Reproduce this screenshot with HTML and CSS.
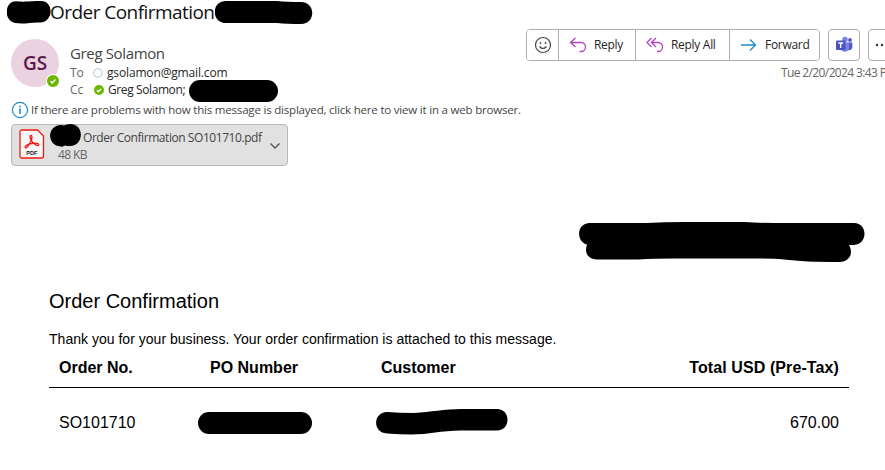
FILE: index.html
```html
<!DOCTYPE html>
<html lang="en">
<head>
<meta charset="utf-8">
<title>Order Confirmation</title>
<link rel="stylesheet" href="styles.css">
</head>
<body>
<header class="subject">
  <svg class="mark-prefix" width="44" height="24" viewBox="0 0 44 24"><path d="M11 1.500C-3-0.500-4 21 8 23C18 24.500 24 22 33 22.500C47 22 47 1 34 1C24 1 20 2 11 1.500Z"/></svg>
  <h1>Order Confirmation</h1>
  <svg class="mark-suffix" width="98" height="24" viewBox="0 0 98 24"><path d="M11 1H62Q72 2 86 2C101 2 101 24 86 24Q72 24 62 23H11C-4 23-4 1 11 1Z"/></svg>
</header>

<section class="message-head">
  <div class="avatar">GS
    <svg class="presence" width="14" height="14" viewBox="0 0 14 14"><circle cx="7" cy="7" r="7" fill="#fff"/><circle cx="7" cy="7" r="6" fill="#6bb700"/><path d="M4.500 7.200L6.200 8.900L9.500 5.500" fill="none" stroke="#fff" stroke-width="1.500"/></svg>
  </div>
  <div class="people">
    <div class="name"><span>Greg Solamon</span></div>
    <div class="line"><span class="label">To</span>
      <svg class="dot" width="10" height="10" viewBox="0 0 10 10"><circle cx="5" cy="5" r="4.300" fill="#fff" stroke="#a9c8d8"/></svg>
      <span class="email">gsolamon@gmail.com</span></div>
    <div class="line"><span class="label">Cc</span>
      <svg class="dot cc-dot" width="10" height="10" viewBox="0 0 10 10"><circle cx="5" cy="5" r="5" fill="#6bb700"/><path d="M2.900 5.200L4.400 6.700L7.200 3.800" fill="none" stroke="#fff" stroke-width="1.300"/></svg>
      <span class="cc-name">Greg Solamon;</span>
      <span class="mark-cc"></span></div>
  </div>
  <div class="side">
    <div class="actions">
      <div class="group">
        <button class="smile" aria-label="React"><svg width="18" height="18" viewBox="0 0 18 18" fill="none" stroke="#444" stroke-width="1.200"><circle cx="9" cy="9" r="7.500"/><path d="M5.500 10.500Q9 14.500 12.500 10.500"/><circle cx="6.500" cy="7" r=".7" fill="#444" stroke-width=".6"/><circle cx="11.500" cy="7" r=".7" fill="#444" stroke-width=".6"/></svg></button>
        <button class="reply"><svg width="18" height="18" viewBox="0 0 18 18" fill="none" stroke="#b146c2" stroke-width="1.300"><path d="M6.500 2L1.500 6.500L6.500 11M1.500 6.500H12A4.500 4.500 0 0 1 12 15.500H10.500"/></svg><span>Reply</span></button>
        <button class="reply-all"><svg width="18" height="18" viewBox="0 0 18 18" fill="none" stroke="#b146c2" stroke-width="1.300"><path d="M5.500 2L1 6.500L5.500 11M10 2L5.500 6.500L10 11M5.500 6.500H12A4.500 4.500 0 0 1 12 15.500H11"/></svg><span>Reply All</span></button>
        <button class="forward"><svg width="18" height="18" viewBox="0 0 18 18" fill="none" stroke="#1e8bcd" stroke-width="1.300"><path d="M1 9H15.500M10 3.500L15.500 9L10 14.500"/></svg><span>Forward</span></button>
      </div>
      <button class="square" aria-label="Teams"><svg width="18" height="18" viewBox="0 0 18 18"><circle cx="15" cy="4" r="1.900" fill="#5059c9"/><path d="M12 6.500H17.300V11.500A3.200 3.200 0 0 1 12 13.500Z" fill="#5059c9"/><circle cx="10" cy="3.500" r="2.700" fill="#7b83eb"/><path d="M5.500 6.500H14V12A4.300 4.300 0 0 1 5.500 12Z" fill="#7b83eb"/><rect x="1" y="4.500" width="9.500" height="9.500" rx="1" fill="#4b53bc"/><path d="M3.300 7H8.200M5.750 7V12" stroke="#fff" stroke-width="1.300"/></svg></button>
      <button class="square more" aria-label="More"><svg width="16" height="4" viewBox="0 0 16 4" fill="#333"><circle cx="2" cy="2" r="1.200"/><circle cx="7" cy="2" r="1.200"/><circle cx="12" cy="2" r="1.200"/></svg></button>
    </div>
    <div class="date"><span>Tue 2/20/2024 3:43 PM</span></div>
  </div>
</section>

<div class="notice">
  <svg width="18" height="18" viewBox="0 0 18 18"><circle cx="9" cy="9" r="7.600" fill="#fff" stroke="#1e8bcd" stroke-width="1.200"/><path d="M9 7.500V13M9 4.700V6.300" stroke="#1e8bcd" stroke-width="1.600"/></svg>
  <span>If there are problems with how this message is displayed, click here to view it in a web browser.</span>
</div>

<div class="attachment">
  <svg class="pdf" width="26" height="30" viewBox="0 0 26 30"><path d="M3 1H18.500L24.500 7V27Q24.500 29 22.500 29H3Q1 29 1 27V3Q1 1 3 1Z" fill="#f7f7f7" stroke="#f01b12" stroke-width="1.300"/><path d="M12 6.500C10.500 6.500 10.800 9.500 13 12.500C15 15.500 19 17.500 19.800 16C20.500 14.300 16 13.700 12.500 14.500C8.500 15.300 5.300 17 6.300 18.500C7.500 20 10.500 15.500 12 12C13.200 9 13.300 6.500 12 6.500Z" fill="none" stroke="#f01b12" stroke-width="1.300"/><text x="12.800" y="25.800" class="pdf-text">PDF</text></svg>
  <div class="file">
    <div class="file-name"><svg class="mark-file" width="31" height="23" viewBox="0 0 31 23"><path d="M11 1Q13 1 14 1.500Q17 0 20 0C35 0 34 22 20 22Q17 22 15 21.500Q13 23 11 22.500C-4 22-3 1 11 1Z"/></svg><span>Order Confirmation SO101710.pdf</span></div>
    <div class="file-size"><span>48 KB</span></div>
  </div>
  <svg class="chevron" width="12" height="8" viewBox="0 0 12 8"><path d="M1.500 1.500L6 6L10.500 1.500" fill="none" stroke="#555" stroke-width="1.400"/></svg>
</div>

<main>
  <svg class="mark-sender" width="286" height="42" viewBox="0 0 286 42"><path d="M11 2H68Q85 1 105 1H165Q180 2 195 2H275C289 2 289 23.500 275 24H270C275 33 270 41 260 41Q225 41 205 38.500Q195 37.500 180 37.500H95Q75 37.500 60 38.500H19C9 38.500 5 32 8 23.500C-3 21-3 2 11 2Z"/></svg>
  <h2>Order Confirmation</h2>
  <p>Thank you for your business. Your order confirmation is attached to this message.</p>
  <div class="row head"><div>Order No.</div><div>PO Number</div><div>Customer</div><div class="total">Total USD (Pre-Tax)</div></div>
  <div class="row">
    <div>SO101710</div>
    <div><span class="mark-po"></span></div>
    <div><svg class="mark-customer" width="132" height="27" viewBox="0 0 132 27"><path d="M11 4Q24 5 38 5C55 4 68 1 86 1H121C135 1 135 22.500 121 22.500H85C65 22.500 53 26.500 35 26.500Q24 26.500 11 25.500C-4 25-3 4 11 4Z"/></svg></div>
    <div class="total">670.00</div>
  </div>
</main>
</body>
</html>
```
FILE: styles.css
```css
* { box-sizing: border-box; }
body {
  margin: 0;
  width: 885px;
  height: 470px;
  overflow: hidden;
  background: #fff;
  color: #262626;
  font-family: "Open Sans", "Noto Sans", sans-serif;
  font-size: 12px;
}
svg { display: block; flex: none; }
span, h1, h2 { white-space: nowrap; }

.subject { display: flex; height: 27px; padding-left: 7px; }
.subject h1 { margin: 0 0 0 -1px; width: 165px; font-size: 19px; font-weight: 400; line-height: 25px; letter-spacing: -.55px; color: #111; }

.message-head { display: flex; height: 74px; padding-left: 11px; }
.avatar {
  position: relative;
  flex: none;
  width: 48px;
  height: 48px;
  margin-top: 12px;
  border-radius: 50%;
  background: #ead2e0;
  color: #59194a;
  font-size: 19px;
  font-weight: 600;
  line-height: 48px;
  text-align: center;
}
.presence { position: absolute; right: -1px; bottom: -1px; }
.people { width: 467px; flex: none; padding: 16px 0 0 11px; }
.name { height: 21px; font-size: 15px; line-height: 20px; letter-spacing: -.36px; color: #444; }
.line { display: flex; align-items: center; height: 17px; line-height: 17px; }
.label { width: 23px; color: #666; }
.dot { margin-right: 4px; }
.cc-dot { margin-left: 1px; }
.email { letter-spacing: -.15px; }
.cc-name { width: 81px; letter-spacing: -.4px; }
.mark-cc { width: 89px; height: 22px; flex: none; border-radius: 11px; background: #000; margin-top: 3px; }

.side { flex: none; width: 380px; padding-top: 2px; }
.actions { display: flex; gap: 8px; height: 32px; }
button { display: flex; align-items: center; margin: 0; padding: 0; border: 0; background: #fff; font: inherit; color: #262626; line-height: 18px; }
.group { display: flex; width: 294px; border: 1px solid #b0aeac; border-radius: 4px; overflow: hidden; }
.group button + button { border-left: 1px solid #b0aeac; }
.smile { width: 31px; justify-content: center; }
.reply { width: 77px; padding-left: 10px; gap: 7px; }
.reply-all { width: 94px; padding-left: 10px; gap: 7px; }
.forward { flex: 1; padding-left: 10px; gap: 7px; }
.group button span { letter-spacing: -.3px; }
.square { flex: none; width: 32px; justify-content: center; border: 1px solid #b0aeac; border-radius: 4px; }
.more { justify-content: flex-start; padding-left: 6px; }
.date { padding-left: 255px; height: 18px; margin-top: 3px; line-height: 18px; letter-spacing: -.62px; color: #666; }

.notice { display: flex; align-items: center; height: 18px; padding-left: 11px; gap: 2px; color: #444; font-size: 11.5px; line-height: 18px; letter-spacing: -.195px; }

.attachment { display: flex; width: 277px; height: 42px; margin: 5px 0 0 11px; padding-left: 7px; border: 1px solid #b8b8b8; border-radius: 4px; background: #e1e1e1; }
.pdf { margin-top: 4px; }
.pdf-text { font: 700 5.5px "Liberation Sans", sans-serif; text-anchor: middle; fill: #222; }
.file { width: 224px; flex: none; padding-left: 5px; color: #444; }
.file-name { display: flex; gap: 2px; height: 23px; margin-top: -1px; line-height: 27px; }
.file-name span { letter-spacing: -.44px; }
.file-size { padding-left: 8px; line-height: 15px; color: #666; letter-spacing: -.6px; }
.chevron { margin-top: 17px; }

main { width: 800px; margin: 55px 0 0 49px; color: #000; font-family: "Liberation Sans", Arial, sans-serif; }
.mark-sender { margin-left: 530px; }
h2 { margin: 26px 0 0; font-size: 20px; font-weight: 400; line-height: 24px; }
p { margin: 17px 0 0; font-size: 14px; line-height: 18px; letter-spacing: .02px; }
.row { display: grid; grid-template-columns: 151px 171px 1fr 190px; align-items: center; height: 69px; padding: 0 10px; font-size: 16px; line-height: 20px; }
.head { height: 40px; border-bottom: 1px solid #000; font-weight: 700; }
.total { text-align: right; }
.head .total { letter-spacing: .1px; }
.mark-po { display: block; width: 114px; height: 22px; margin-left: -12px; border-radius: 11px; background: #000; }
.mark-customer { margin: 0 0 2px -5px; }
```
